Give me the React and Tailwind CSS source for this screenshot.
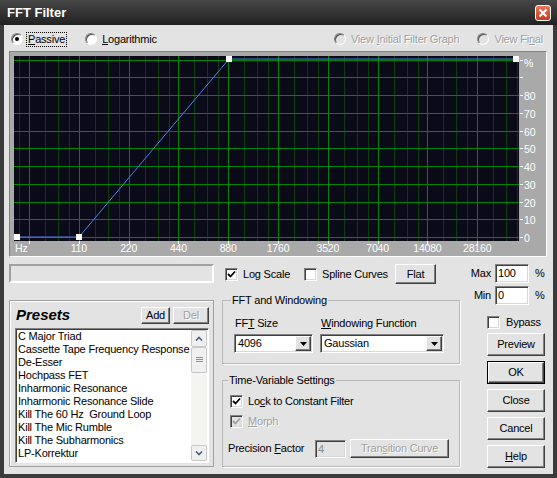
import React from 'react';

const sunken = 'border border-t-[#808080] border-l-[#808080] border-b-white border-r-white shadow-[inset_1px_1px_0_#404040,inset_-1px_-1px_0_#d8d8d8]';
const raised = 'border border-t-white border-l-white border-b-[#404040] border-r-[#404040] shadow-[inset_-1px_-1px_0_#808080]';
const dim = 'text-[#a0a0a0] [text-shadow:1px_1px_0_#fff]';

const presets = [
    'C Major Triad',
    'Cassette Tape Frequency Response',
    'De-Esser',
    'Hochpass FET',
    'Inharmonic Resonance',
    'Inharmonic Resonance Slide',
    'Kill The 60 Hz  Ground Loop',
    'Kill The Mic Rumble',
    'Kill The Subharmonics',
    'LP-Korrektur',
    'LP-Hochpass',
];

const Radio = ({ checked, disabled }) => (
    <span className={`flex items-center justify-center w-[12px] h-[12px] rounded-full border border-t-[#808080] border-l-[#808080] border-b-white border-r-white shadow-[inset_1px_1px_0_#505050] ${disabled ? 'bg-[#e3e3e3]' : 'bg-white'}`}>
        {checked && <span className="w-[4px] h-[4px] rounded-full bg-black" />}
    </span>
);

const Check = ({ checked, disabled }) => (
    <span className={`flex items-center justify-center w-[13px] h-[13px] shrink-0 ${sunken} ${disabled ? 'bg-[#e3e3e3]' : 'bg-white'}`}>
        {checked && (
            <svg width="9" height="9" viewBox="0 0 9 9">
                <polyline points="1,4 3.5,6.5 8,1.5" fill="none" stroke={disabled ? '#a0a0a0' : '#000'} strokeWidth="1.8" />
            </svg>
        )}
    </span>
);

const Btn = ({ children, className = '', disabled }) => (
    <div className={`flex items-center justify-center bg-[#e3e3e3] ${raised} ${disabled ? dim : ''} ${className}`}>{children}</div>
);

const Arrow = () => (
    <div className={`flex items-center justify-center w-[16px] h-full bg-[#e3e3e3] ${raised}`}>
        <svg width="7" height="4" viewBox="0 0 7 4"><polygon points="0,0 7,0 3.5,4" fill="#000" /></svg>
    </div>
);

const Select = ({ value, className }) => (
    <div className={`flex h-[19px] bg-white ${sunken} ${className}`}>
        <span className="flex-1 pl-[3px] leading-[17px]">{value}</span>
        <div className="p-[1px] h-full"><Arrow /></div>
    </div>
);

const Graph = () => {
    const octX = k => 19 + 49.8 * k;
    const levels = Array.from({ length: 11 }, (_, i) => Math.round(7.5 + 17.75 * i) + 0.5);
    const bright = [];
    const dimLines = [];
    for (let k = -1; k <= 9; k++) {
        const x = octX(k);
        if (x >= 4 && x <= 509) bright.push(Math.round(x) + 0.5);
        [16, 29, 40].forEach(o => {
            const d = x + o;
            if (d >= 5 && d <= 508) dimLines.push(Math.round(d) + 0.5);
        });
    }
    const freq = ['110', '220', '440', '880', '1760', '3520', '7040', '14080', '28160'];
    const pts = [[7, 185], [69, 185], [219, 7], [506, 7]];

    return (
        <svg width="536" height="204" viewBox="0 0 536 204" className="block">
            <rect x="4" y="4" width="505" height="185" fill="#0a0a18" />
            {dimLines.map(x => <line key={'d' + x} x1={x} x2={x} y1="4" y2="189" stroke="#0a3d0a" />)}
            {bright.map(x => <line key={'b' + x} x1={x} x2={x} y1="4" y2="189" stroke="#008500" />)}
            {levels.map(y => <line key={'h' + y} x1="4" x2="509" y1={y} y2={y} stroke="#008500" />)}
            <polyline points={pts.map(p => p.join(',')).join(' ')} fill="none" stroke="#4f7fe8" strokeWidth="1" />
            {pts.map(([x, y]) => <rect key={x} x={x - 3} y={y - 3} width="6" height="6" fill="#fff" />)}
            {bright.map(x => <line key={'t' + x} x1={x} x2={x} y1="189" y2="192" stroke="#fff" />)}
            <g fontFamily="'Liberation Sans', Arial, sans-serif" fontSize="10.5" fill="#fff">
                <text x="5" y="200">Hz</text>
                {freq.map((f, i) => <text key={f} x={octX(i + 1)} y="200" textAnchor="middle">{f}</text>)}
                {levels.map((y, i) => (
                    <g key={'r' + i}>
                        <line x1="510" x2="513" y1={y} y2={y} stroke="#fff" />
                        {i !== 1 && <text x="514" y={y + (i === 0 ? 6 : 4)}>{i === 0 ? '%' : 100 - 10 * i}</text>}
                    </g>
                ))}
            </g>
        </svg>
    );
};

const App = () => {
    return (
        <div className="w-[557px] h-[478px] flex flex-col bg-[#3a3a3a] text-[11px] text-black font-['Liberation_Sans',Arial,sans-serif] tracking-[-0.2px] overflow-hidden">
            {/* title bar */}
            <div className="h-[25px] flex items-center pl-[7px] pr-[6px] bg-linear-to-b from-[#474747] to-[#222222]">
                <span className="text-[13px] font-bold text-white tracking-normal">FFT Filter</span>
                <div className="ml-auto w-[16px] h-[16px] rounded-[3px] border border-white bg-linear-to-b from-[#e8765a] to-[#c8391c] flex items-center justify-center">
                    <svg width="10" height="10" viewBox="0 0 10 10"><path d="M1.5 1.5 L8.5 8.5 M8.5 1.5 L1.5 8.5" stroke="#fff" strokeWidth="2" /></svg>
                </div>
            </div>

            <div className="mx-[4px] mb-[4px] flex-1 bg-[#e3e3e3] flex flex-col pt-[5px]">
                {/* radio row */}
                <div className="h-[18px] flex items-center pl-[7px] pr-[10px]">
                    <Radio checked />
                    <span className="ml-[3px] px-[1px] border border-dotted border-black leading-[13px]"><span className="underline">P</span>assive</span>
                    <span className="ml-[18px]"><Radio /></span>
                    <span className="ml-[5px]"><span className="underline">L</span>ogarithmic</span>
                    <span className="ml-auto"><Radio disabled /></span>
                    <span className={`ml-[5px] ${dim}`}>View <span className="underline">I</span>nitial Filter Graph</span>
                    <span className="ml-[18px]"><Radio disabled /></span>
                    <span className={`ml-[5px] ${dim}`}>View Fi<span className="underline">n</span>al</span>
                </div>

                {/* graph */}
                <div className="mt-[3px] ml-[5px] w-[538px] h-[206px] bg-[#a9a9a9] border border-t-[#808080] border-l-[#808080] border-b-white border-r-white">
                    <Graph />
                </div>

                {/* lower area */}
                <div className="mt-[7px] pl-[5px] flex">
                    {/* left column */}
                    <div className="w-[205px] flex flex-col">
                        <div className="h-[19px] border-2 border-t-[#a0a0a0] border-l-[#a0a0a0] border-b-white border-r-white bg-[#e3e3e3]" />
                        <div className="mt-[17px] h-[167px] border border-[#a0a0a0] shadow-[inset_1px_1px_0_#fff] pt-[6px] pl-[5px] pr-[4px] flex flex-col">
                            <div className="h-[17px] flex items-center">
                                <span className="ml-[1px] text-[15px] font-bold italic tracking-normal">Presets</span>
                                <Btn className="ml-auto w-[29px] h-[17px]">Add</Btn>
                                <Btn className="ml-[3px] w-[36px] h-[17px]" disabled>Del</Btn>
                            </div>
                            <div className="mt-[4px] h-[135px] flex bg-white border border-t-[#808080] border-l-[#808080] border-b-white border-r-white shadow-[inset_1px_1px_0_#404040]">
                                <div className="flex-1 overflow-hidden pl-[2px] pt-[1px]">
                                    {presets.map(p => (
                                        <div key={p} className="h-[13px] leading-[13px] whitespace-pre">{p}</div>
                                    ))}
                                </div>
                                <div className="w-[16px] mr-[1px] my-[1px] flex flex-col bg-[#f4f4f0]">
                                    <div className="h-[17px] flex items-center justify-center rounded-[2px] border border-[#c8c8c8] bg-[#f0f0f0]">
                                        <svg width="8" height="5" viewBox="0 0 8 5"><polyline points="1,4.5 4,1.5 7,4.5" fill="none" stroke="#4d6185" strokeWidth="1.6" /></svg>
                                    </div>
                                    <div className="h-[26px] flex items-center justify-center rounded-[2px] border border-[#c8c8c8] bg-[#f0f0f0]">
                                        <svg width="7" height="6" viewBox="0 0 7 6"><path d="M0 0.5H7M0 2.5H7M0 4.5H7" stroke="#909090" /></svg>
                                    </div>
                                    <div className="flex-1" />
                                    <div className="h-[16px] flex items-center justify-center rounded-[2px] border border-[#c8c8c8] bg-[#f0f0f0]">
                                        <svg width="8" height="5" viewBox="0 0 8 5"><polyline points="1,0.5 4,3.5 7,0.5" fill="none" stroke="#4d6185" strokeWidth="1.6" /></svg>
                                    </div>
                                </div>
                            </div>
                        </div>
                    </div>

                    {/* middle column */}
                    <div className="ml-[8px] w-[238px] flex flex-col">
                        <div className="h-[20px] flex items-center pl-[3px]">
                            <div className="w-[79px] flex items-center"><Check checked /><span className="ml-[5px]">Log Scale</span></div>
                            <div className="w-[91px] flex items-center"><Check /><span className="ml-[5px]">Spline Curves</span></div>
                            <Btn className="w-[41px] h-[20px]">Flat</Btn>
                        </div>

                        <fieldset className="mt-[9px] h-[71px] border border-[#b8b8b8] shadow-[1px_1px_0_#fff] pl-[11px] pr-[6px]">
                            <legend className="-ml-[3px] px-[1px] leading-[14px]">FFT and Windowing</legend>
                            <div className="flex mt-[9px]">
                                <div className="w-[86px] flex flex-col">
                                    <span className="pl-[1px] leading-[14px]">FF<span className="underline">T</span> Size</span>
                                    <Select value="4096" className="mt-[4px] w-[79px]" />
                                </div>
                                <div className="flex flex-col">
                                    <span className="pl-[1px] leading-[14px]"><span className="underline">W</span>indowing Function</span>
                                    <Select value="Gaussian" className="mt-[4px] w-[124px]" />
                                </div>
                            </div>
                        </fieldset>

                        <fieldset className="mt-[9px] h-[94px] border border-[#b8b8b8] shadow-[1px_1px_0_#fff] pl-[7px] pr-[6px]">
                            <legend className="-ml-[2px] px-[1px] leading-[14px]">Time-Variable Settings</legend>
                            <div className="mt-[8px] h-[13px] flex items-center"><Check checked /><span className="ml-[5px]">Lo<span className="underline">c</span>k to Constant Filter</span></div>
                            <div className="mt-[7px] h-[13px] flex items-center"><Check checked disabled /><span className={`ml-[5px] ${dim}`}><span className="underline">M</span>orph</span></div>
                            <div className="mt-[11px] h-[19px] flex items-center -ml-[2px]">
                                <span className="w-[87px]">Precision <span className="underline">F</span>actor</span>
                                <div className={`w-[31px] h-[18px] bg-[#e3e3e3] ${sunken} pl-[2px] leading-[16px] text-[#8a8a8a]`}>4</div>
                                <Btn className="ml-[4px] w-[99px] h-[19px]" disabled>Tran<span className="underline">s</span>ition Curve</Btn>
                            </div>
                        </fieldset>
                    </div>

                    {/* right column */}
                    <div className="ml-[8px] w-[80px] flex flex-col">
                        <div className="h-[19px] flex items-center">
                            <span className="w-[27px] text-right pr-[4px]">Max</span>
                            <div className={`w-[34px] h-[19px] bg-white ${sunken} pl-[2px] leading-[17px]`}>100</div>
                            <span className="ml-[6px]">%</span>
                        </div>
                        <div className="mt-[3px] h-[19px] flex items-center">
                            <span className="w-[27px] text-right pr-[4px]">Min</span>
                            <div className={`w-[34px] h-[19px] bg-white ${sunken} pl-[2px] leading-[17px]`}>0</div>
                            <span className="ml-[6px]">%</span>
                        </div>
                        <div className="mt-[11px] h-[13px] flex items-center pl-[19px]"><Check /><span className="ml-[6px]">Bypass</span></div>
                        <div className="pl-[19px] flex flex-col">
                            <Btn className="mt-[4px] w-[58px] h-[23px]">Preview</Btn>
                            <div className="mt-[5px] w-[58px] h-[23px] border border-black flex">
                                <Btn className="flex-1">OK</Btn>
                            </div>
                            <Btn className="mt-[5px] w-[58px] h-[23px]">Close</Btn>
                            <Btn className="mt-[5px] w-[58px] h-[23px]">Cancel</Btn>
                            <Btn className="mt-[5px] w-[58px] h-[23px]"><span><span className="underline">H</span>elp</span></Btn>
                        </div>
                    </div>
                </div>
            </div>
        </div>
    );
};

export default App;
